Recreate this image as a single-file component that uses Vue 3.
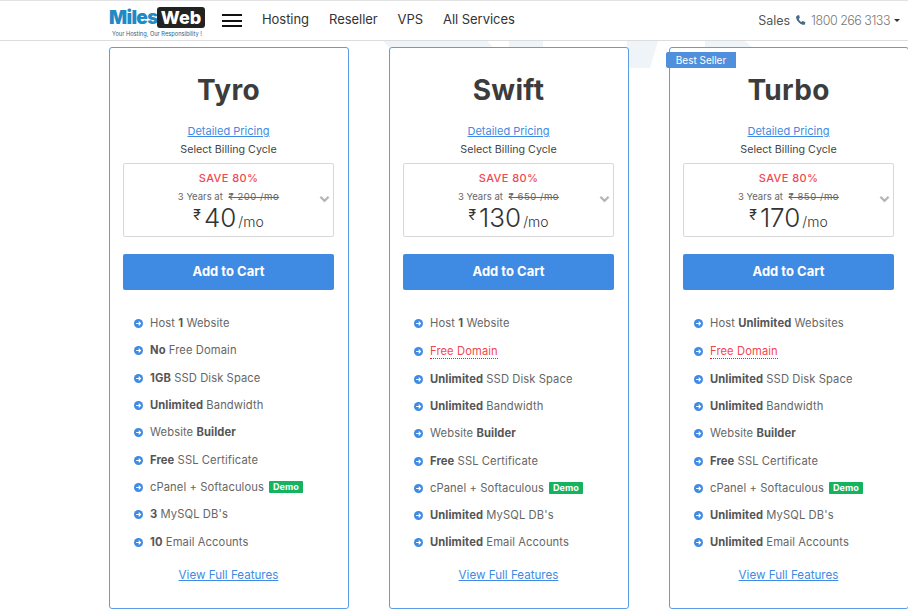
<script setup>
const navLinks = ['Hosting', 'Reseller', 'VPS', 'All Services'];

const plans = [
  {
    name: 'Tyro', oldPrice: '200', price: '40',
    features: [
      [['', 'Host '], ['b', '1'], ['', ' Website']],
      [['b', 'No'], ['', ' Free Domain']],
      [['b', '1GB'], ['', ' SSD Disk Space']],
      [['b', 'Unlimited'], ['', ' Bandwidth']],
      [['', 'Website '], ['b', 'Builder']],
      [['b', 'Free'], ['', ' SSL Certificate']],
      'demo',
      [['b', '3'], ['', " MySQL DB's"]],
      [['b', '10'], ['', ' Email Accounts']],
    ],
  },
  {
    name: 'Swift', oldPrice: '650', price: '130',
    features: [
      [['', 'Host '], ['b', '1'], ['', ' Website']],
      'domain',
      [['b', 'Unlimited'], ['', ' SSD Disk Space']],
      [['b', 'Unlimited'], ['', ' Bandwidth']],
      [['', 'Website '], ['b', 'Builder']],
      [['b', 'Free'], ['', ' SSL Certificate']],
      'demo',
      [['b', 'Unlimited'], ['', " MySQL DB's"]],
      [['b', 'Unlimited'], ['', ' Email Accounts']],
    ],
  },
  {
    name: 'Turbo', oldPrice: '850', price: '170', bestSeller: true,
    features: [
      [['', 'Host '], ['b', 'Unlimited'], ['', ' Websites']],
      'domain',
      [['b', 'Unlimited'], ['', ' SSD Disk Space']],
      [['b', 'Unlimited'], ['', ' Bandwidth']],
      [['', 'Website '], ['b', 'Builder']],
      [['b', 'Free'], ['', ' SSL Certificate']],
      'demo',
      [['b', 'Unlimited'], ['', " MySQL DB's"]],
      [['b', 'Unlimited'], ['', ' Email Accounts']],
    ],
  },
];
</script>

<template>
  <div class="page">
    <header class="header">
      <div class="logo">
        <div class="logo-top">
          <span class="logo-miles">Miles</span>
          <span class="logo-web">Web</span>
        </div>
        <div class="logo-tag">Your Hosting, Our Responsibility !</div>
      </div>
      <div class="burger"><i></i><i></i><i></i></div>
      <nav class="nav">
        <a v-for="link in navLinks" :key="link">{{ link }}</a>
      </nav>
      <div class="sales">
        <span>Sales</span>
        <svg class="phone" viewBox="0 0 16 16" width="11" height="12">
          <path d="M4 1 L6.2 1 L7 5 L5.4 6.2 C6 8.2 7.4 10 9.4 11 L10.8 9.6 L15 11 L14.6 14 C14 15 12.5 15.2 11 14.8 C6.5 13.6 2.6 9.4 1.6 5.2 C1.2 3.4 2.4 1.4 4 1 Z" fill="#4a6a85" />
        </svg>
        <span class="sales-num">1800 266 3133</span>
        <i class="caret"></i>
      </div>
    </header>

    <main class="plans">
      <svg class="bg-shapes" viewBox="0 0 908 70" width="908" height="70">
        <path d="M383 41 H487 L510 64 H405 Z" fill="#eff4f8" />
        <path d="M509 41 H543 V60 H509 Z" fill="#eff4f8" />
        <path d="M627 41 H658 L650 68 H627 Z" fill="#eff4f8" />
        <path d="M705 41 H745 L755 50 H705 Z" fill="#eff4f8" />
      </svg>
      <section v-for="plan in plans" :key="plan.name" class="card">
        <span v-if="plan.bestSeller" class="ribbon">Best Seller</span>
        <h2 class="plan-name">{{ plan.name }}</h2>
        <a class="link detail">Detailed Pricing</a>
        <p class="billing">Select Billing Cycle</p>
        <div class="cycle">
          <div class="save">SAVE 80%</div>
          <div class="years">
            3 Years at <s class="old">₹ {{ plan.oldPrice }} /mo</s>
          </div>
          <div class="price">
            <span class="rupee">₹</span><span class="amount">{{ plan.price }}</span><span class="per">/mo</span>
          </div>
          <svg class="chevron" viewBox="0 0 12 8" width="11" height="8">
            <path d="M1.5 1.5 L6 6 L10.5 1.5" fill="none" stroke="#b5b5b5" stroke-width="2.4" />
          </svg>
        </div>
        <button class="cart">Add to Cart</button>
        <ul class="features">
          <li v-for="(feature, i) in plan.features" :key="i" :class="{ 'row-domain': feature === 'domain' }">
            <svg class="bullet" viewBox="0 0 10 10" width="9" height="9">
              <circle cx="5" cy="5" r="5" fill="#3f8ae2" />
              <path d="M2.4 5 H7 M5.2 3 L7.2 5 L5.2 7" fill="none" stroke="#fff" stroke-width="1.3" />
            </svg>
            <span v-if="feature === 'domain'" class="no-domain">Free Domain</span>
            <template v-else-if="feature === 'demo'">
              <span>cPanel + Softaculous</span>
              <span class="demo">Demo</span>
            </template>
            <span v-else class="feature-text">
              <template v-for="(part, j) in feature" :key="j">
                <b v-if="part[0] === 'b'">{{ part[1] }}</b>
                <template v-else>{{ part[1] }}</template>
              </template>
            </span>
          </li>
        </ul>
        <a class="link full">View Full Features</a>
      </section>
    </main>
  </div>
</template>

<style>
html,
body {
  margin: 0;
  overflow: hidden;
  background: #fff;
}
</style>

<style scoped>
.page {
  width: 908px;
  height: 615px;
  overflow: hidden;
  position: relative;
  font-family: Inter, "Open Sans", "Liberation Sans", sans-serif;
  color: #555;
}

.header {
  box-sizing: border-box;
  height: 41px;
  display: flex;
  align-items: center;
  padding: 0 8px 0 109px;
  border-top: 1px solid #e2e2e2;
  border-bottom: 1px solid #ddd;
  background: #fff;
}

.logo {
  flex: 0 0 97px;
  margin-top: -1px;
}

.logo-top {
  display: flex;
  align-items: center;
  height: 21px;
  margin-top: 3px;
}

.logo-miles {
  width: 48px;
  font-size: 19px;
  font-weight: 900;
  color: #1f8ac4;
  letter-spacing: -0.7px;
  white-space: nowrap;
}

.logo-web {
  width: 48px;
  text-align: center;
  background: #222;
  color: #fff;
  font-size: 18px;
  font-weight: 800;
  line-height: 21px;
  border-radius: 3px;
}

.logo-tag {
  font-size: 5.7px;
  color: #2c5f86;
  margin: 2px 0 0 3px;
  white-space: nowrap;
}

.burger {
  width: 20px;
  margin-left: 16px;
  display: flex;
  flex-direction: column;
  gap: 3.5px;
}

.burger i {
  display: block;
  height: 2px;
  background: #111;
}

.nav {
  display: flex;
  gap: 20px;
  margin-left: 20px;
  font-size: 13px;
  letter-spacing: -0.05px;
  color: #333;
  margin-top: -4px;
}

.sales {
  margin-left: auto;
  display: flex;
  align-items: center;
  gap: 5px;
  font-size: 12.5px;
  color: #555;
  margin-top: -1px;
}

.sales-num {
  color: #777;
  font-weight: 300;
  letter-spacing: -0.5px;
}

.caret {
  width: 0;
  height: 0;
  margin-left: -1px;
  border: 3px solid transparent;
  border-top: 3px solid #333;
  border-bottom: none;
}

.plans {
  position: relative;
  display: flex;
  gap: 40px;
  width: 960px;
  padding: 6px 0 0 109px;
}

.bg-shapes {
  position: absolute;
  left: 0;
  top: -41px;
}

.card {
  position: relative;
  box-sizing: border-box;
  flex: 0 0 240px;
  height: 562px;
  padding: 0 14px 0 13px;
  border: 1px solid #5b9de6;
  border-radius: 3px;
  background: #fff;
  text-align: center;
}

.ribbon {
  position: absolute;
  left: -4px;
  top: 4px;
  width: 70px;
  height: 16px;
  line-height: 16px;
  font-size: 10px;
  color: #fff;
  background: #4f8fdb;
  border-radius: 2px 0 0 2px;
}

.plan-name {
  margin: 24px 0 0;
  font-size: 28px;
  line-height: 36px;
  font-weight: 700;
  letter-spacing: 0.3px;
  color: #3c3c3c;
}

.link {
  color: #3f8ae2;
  text-decoration: underline;
  font-size: 11px;
}

.detail {
  display: block;
  margin-top: 15px;
  line-height: 16px;
}

.billing {
  margin: 3px 0 0;
  font-size: 10.7px;
  line-height: 16px;
  color: #444;
}

.cycle {
  position: relative;
  box-sizing: border-box;
  height: 74px;
  margin-top: 5px;
  padding-top: 7px;
  border: 1px solid #d8d8d8;
  border-radius: 2px;
}

.save {
  font-size: 11px;
  line-height: 15px;
  font-weight: 500;
  letter-spacing: 0.4px;
  color: #f2474f;
}

.years {
  margin-top: 4px;
  font-size: 9.5px;
  line-height: 13px;
  color: #666;
}

.old {
  margin-left: 3px;
  letter-spacing: 0.55px;
}

.price {
  margin-top: -2px;
  line-height: 28px;
  color: #333;
  white-space: nowrap;
}

.rupee {
  font-size: 14px;
  vertical-align: 7px;
  margin-right: 3px;
}

.amount {
  font-size: 26px;
  font-weight: 300;
}

.per {
  font-size: 14px;
  font-weight: 300;
  margin-left: 2px;
}

.chevron {
  position: absolute;
  right: 3px;
  top: 31px;
}

.cart {
  display: block;
  box-sizing: border-box;
  width: 100%;
  height: 36px;
  margin-top: 17px;
  padding: 0 0 2px;
  border: none;
  border-radius: 2px;
  background: #3f8ae2;
  color: #fff;
  font: 700 13px Inter, "Liberation Sans", sans-serif;
}

.features {
  list-style: none;
  height: 246px;
  margin: 20px 0 0;
  padding: 0 0 0 11px;
  font-size: 11.2px;
  letter-spacing: 0.1px;
  color: #666;
  text-align: left;
}

.features li {
  display: flex;
  align-items: center;
  height: 27.3px;
  white-space: nowrap;
}

.features li.row-domain {
  height: 28.2px;
}

.features b {
  font-weight: 700;
  color: #555;
}

.feature-text {
  margin-top: -1px;
}

.bullet {
  flex: none;
  margin-right: 7px;
}

.no-domain {
  color: #f2474f;
  border-bottom: 1px dotted #e22;
  line-height: 14px;
}

.demo {
  margin-left: 5px;
  padding: 0 4px;
  height: 12px;
  line-height: 12px;
  font-size: 9px;
  font-weight: 700;
  color: #fff;
  background: #14b35f;
  border-radius: 1px;
}

.full {
  display: block;
  margin-top: 11px;
  line-height: 16px;
  font-size: 11.6px;
}
</style>
